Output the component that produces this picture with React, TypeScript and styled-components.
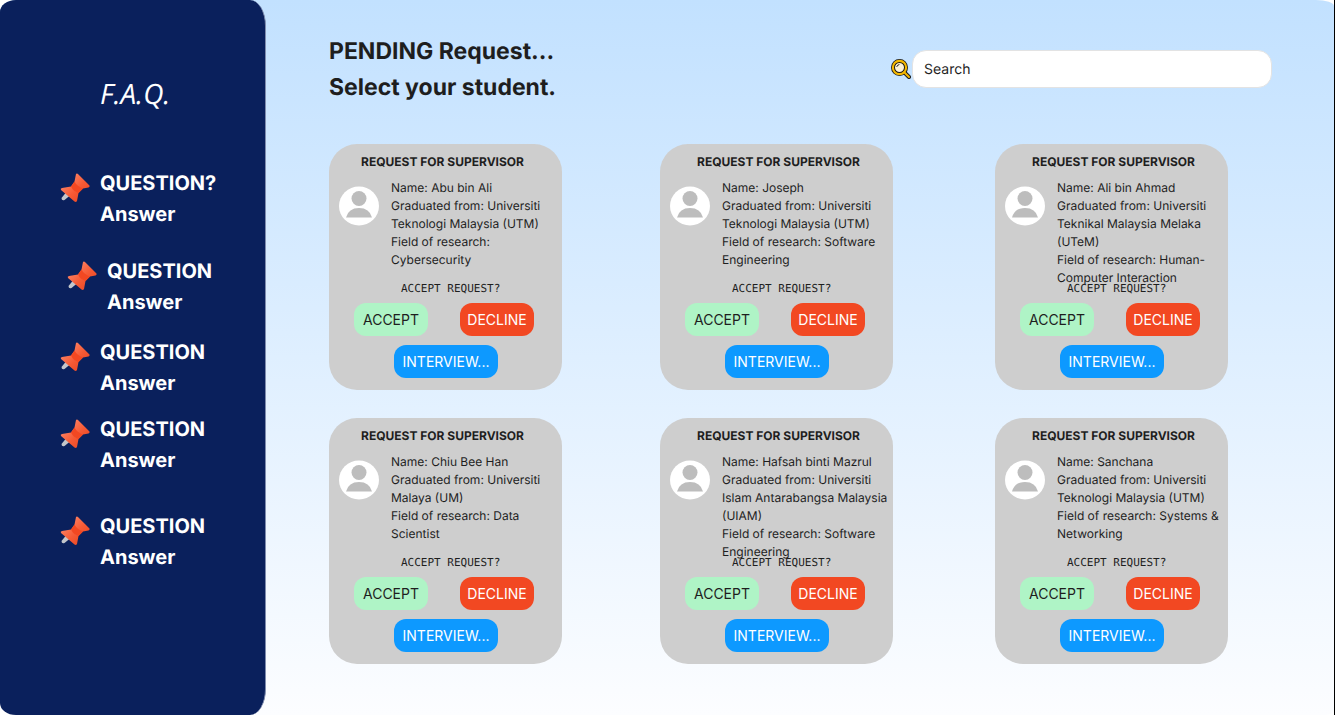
import React from "react";
import styled, { createGlobalStyle } from "styled-components";

const GlobalStyle = createGlobalStyle`
  *, *::before, *::after { box-sizing: border-box; }
  body {
    margin: 0;
    font-family: Inter, "Liberation Sans", sans-serif;
    color: #1e1e1e;
    text-rendering: geometricPrecision;
  }
  h1, h2, h3, p, ul { margin: 0; padding: 0; }
  button, input { font-family: inherit; }
  input { text-rendering: inherit; }
`;

const Frame = styled.div`
  display: flex;
  min-height: 100vh;
  background: #ffffff;
  border-right: 1px solid #000000;
`;

const Page = styled.div`
  display: flex;
  flex: 1;
  min-width: 0;
  background: linear-gradient(180deg, #c2e1ff 0%, #fcfdff 100%);
  border-radius: 16px 18px 8px 16px / 12px 6px 6px 12px;
`;

const Sidebar = styled.aside`
  flex: 0 0 266px;
  padding: 78px 0 24px 60px;
  color: #ffffff;
  background: #0a205c;
  border-right: 1px solid #7f8cae;
  border-radius: 16px / 12px 26px 26px 12px;
`;

const SidebarTitle = styled.h2`
  padding-left: 40px;
  font-family: "Open Sans", sans-serif;
  font-size: 28px;
  font-style: italic;
  font-weight: 400;
  line-height: 32px;
`;

const FaqList = styled.ul`
  list-style: none;
  padding-top: 58px;
`;

const FaqItem = styled.li<{ $gap: number; $indent: number }>`
  display: flex;
  gap: 10px;
  margin-top: ${(p) => p.$gap}px;
  padding-left: ${(p) => p.$indent}px;
`;

const PinIcon = styled.svg`
  flex: none;
  width: 30px;
  height: 30px;
  margin-top: 5px;
`;

const FaqText = styled.p`
  font-size: 20px;
  font-weight: 700;
  line-height: 31px;
`;

const Main = styled.main`
  flex: 1;
  min-width: 0;
  padding: 33px 62px 50px 63px;
`;

const Header = styled.header`
  display: flex;
  justify-content: space-between;
`;

const Heading = styled.h1`
  font-size: 23px;
  font-weight: 700;
  line-height: 36px;
`;

const SearchLabel = styled.label`
  display: flex;
  align-items: center;
  align-self: flex-start;
  gap: 1px;
  padding-top: 17px;
`;

const SearchIcon = styled.svg`
  width: 20px;
  height: 20px;
`;

const SearchInput = styled.input`
  width: 360px;
  height: 38px;
  padding: 0 11px;
  border: 1px solid #e3e3e3;
  border-radius: 14px;
  background: #ffffff;
  color: #1e1e1e;
  font-size: 14px;
  outline: none;
  &::placeholder { color: #1e1e1e; opacity: 1; }
`;

const CardGrid = styled.section`
  display: grid;
  grid-template-columns: 331fr 335fr 233px;
  row-gap: 28px;
  padding: 39px 44px 0 0;
`;

const Card = styled.article`
  width: 233px;
  padding: 10px 0 12px;
  border-radius: 28px;
  background: #cecece;
`;

const CardTitle = styled.h3<{ $indent: number }>`
  padding-left: ${(p) => p.$indent}px;
  font-size: 12px;
  font-weight: 700;
  line-height: 16px;
`;

const Details = styled.div`
  display: flex;
  gap: 12px;
  height: 104px;
  margin-top: 9px;
  padding-left: 10px;
`;

const Avatar = styled.svg`
  flex: none;
  width: 40px;
  height: 40px;
  margin-top: 7px;
`;

const DetailText = styled.div`
  width: 168px;
  font-size: 12px;
  line-height: 18px;
`;

const Prompt = styled.p`
  padding-left: 72px;
  font-family: "DejaVu Sans Mono", monospace;
  font-size: 11px;
  line-height: 12px;
`;

const Actions = styled.div`
  display: grid;
  grid-template-columns: 74px 74px;
  gap: 9px 32px;
  padding: 8px 0 0 25px;
`;

const tones = {
  accept: { background: "#aff4c6", color: "#1e1e1e" },
  decline: { background: "#f24822", color: "#ffffff" },
  interview: { background: "#0d99ff", color: "#ffffff" },
};

const ActionButton = styled.button<{ $tone: keyof typeof tones }>`
  height: 33px;
  padding: 0;
  border: 0;
  border-radius: 12px;
  background: ${(p) => tones[p.$tone].background};
  color: ${(p) => tones[p.$tone].color};
  font-size: 14px;
  white-space: nowrap;
`;

const InterviewButton = styled(ActionButton)`
  grid-column: 1 / -1;
  width: 104px;
  margin-left: 40px;
`;

const faqs = [
  { question: "QUESTION?", gap: 0, indent: 0 },
  { question: "QUESTION", gap: 26, indent: 7 },
  { question: "QUESTION", gap: 19, indent: 0 },
  { question: "QUESTION", gap: 15, indent: 0 },
  { question: "QUESTION", gap: 35, indent: 0 },
];

const requests = [
  { name: "Abu bin Ali", university: "Universiti Teknologi Malaysia (UTM)", field: "Cybersecurity" },
  { name: "Joseph", university: "Universiti Teknologi Malaysia (UTM)", field: "Software Engineering" },
  { name: "Ali bin Ahmad", university: "Universiti Teknikal Malaysia Melaka (UTeM)", field: "Human-Computer Interaction" },
  { name: "Chiu Bee Han", university: "Universiti Malaya (UM)", field: "Data Scientist" },
  { name: "Hafsah binti Mazrul", university: "Universiti Islam Antarabangsa Malaysia (UIAM)", field: "Software Engineering" },
  { name: "Sanchana", university: "Universiti Teknologi Malaysia (UTM)", field: "Systems & Networking" },
];

function Pin() {
  return (
    <PinIcon viewBox="0 0 30 30" aria-hidden="true">
      <defs>
        <linearGradient id="pinHead" x1="0" y1="0" x2="1" y2="1">
          <stop offset="0" stopColor="#ff9a80" />
          <stop offset="0.55" stopColor="#f65a35" />
          <stop offset="1" stopColor="#e5401c" />
        </linearGradient>
      </defs>
      <path d="M1.500 25 L6 19.500 L10 22.500 L4.500 27 Q1.500 28 1.500 25Z" fill="#c3c6cb" />
      <path d="M16 1 Q17 0 18.500 1.500 L29.500 12.500 Q30 14.200 28.500 14.400 L23 15.500 L18.500 20 L17 28 Q16 29.500 14.500 28.500 L1 17 Q0 15.500 2 15 L11 13.500 L14.500 8.500 Z" fill="url(#pinHead)" />
      <path d="M14.500 8.500 Q17 13.500 23 15.500 L18.500 20 Q13 18 11 13.500Z" fill="#f24822" />
    </PinIcon>
  );
}

function Magnifier() {
  return (
    <SearchIcon viewBox="0 0 20 20" aria-hidden="true">
      <path d="M13 13 L18 18" stroke="#1a1a1a" strokeWidth="4" strokeLinecap="round" />
      <circle cx="8.500" cy="8.500" r="6.500" fill="#fff3d6" stroke="#1a1a1a" strokeWidth="4" />
      <circle cx="8.500" cy="8.500" r="6.600" fill="none" stroke="#f5b800" strokeWidth="2.200" />
      <path d="M13.200 13.200 L18 18" stroke="#f5b800" strokeWidth="2" strokeLinecap="round" />
      <path d="M5.800 7.500 Q6.200 6 8 5.600" fill="none" stroke="#1a1a1a" strokeWidth="1" strokeLinecap="round" />
    </SearchIcon>
  );
}

function Person() {
  return (
    <Avatar viewBox="0 0 40 40" aria-hidden="true">
      <ellipse cx="20" cy="20" rx="20" ry="19.500" fill="#ffffff" />
      <circle cx="20" cy="12.500" r="7.500" fill="#bdbdbd" />
      <path d="M7 31.500 Q9.500 22 20 22 Q30.500 22 33 31.500Z" fill="#bdbdbd" />
    </Avatar>
  );
}

export default function App() {
  return (
    <Frame>
      <GlobalStyle />
      <Page>
        <Sidebar>
          <SidebarTitle>F.A.Q.</SidebarTitle>
          <FaqList>
            {faqs.map((faq, i) => (
              <FaqItem key={i} $gap={faq.gap} $indent={faq.indent}>
                <Pin />
                <FaqText>
                  {faq.question}
                  <br />
                  Answer
                </FaqText>
              </FaqItem>
            ))}
          </FaqList>
        </Sidebar>
        <Main>
          <Header>
            <Heading>
              PENDING Request...
              <br />
              Select your student.
            </Heading>
            <SearchLabel>
              <Magnifier />
              <SearchInput type="text" placeholder="Search" aria-label="Search" />
            </SearchLabel>
          </Header>
          <CardGrid>
            {requests.map((request, i) => (
              <Card key={request.name}>
                <CardTitle $indent={i % 3 === 0 ? 32 : 37}>REQUEST FOR SUPERVISOR</CardTitle>
                <Details>
                  <Person />
                  <DetailText>
                    <p>Name: {request.name}</p>
                    <p>Graduated from: {request.university}</p>
                    <p>Field of research: {request.field}</p>
                  </DetailText>
                </Details>
                <Prompt>ACCEPT REQUEST?</Prompt>
                <Actions>
                  <ActionButton type="button" $tone="accept">ACCEPT</ActionButton>
                  <ActionButton type="button" $tone="decline">DECLINE</ActionButton>
                  <InterviewButton type="button" $tone="interview">INTERVIEW...</InterviewButton>
                </Actions>
              </Card>
            ))}
          </CardGrid>
        </Main>
      </Page>
    </Frame>
  );
}
